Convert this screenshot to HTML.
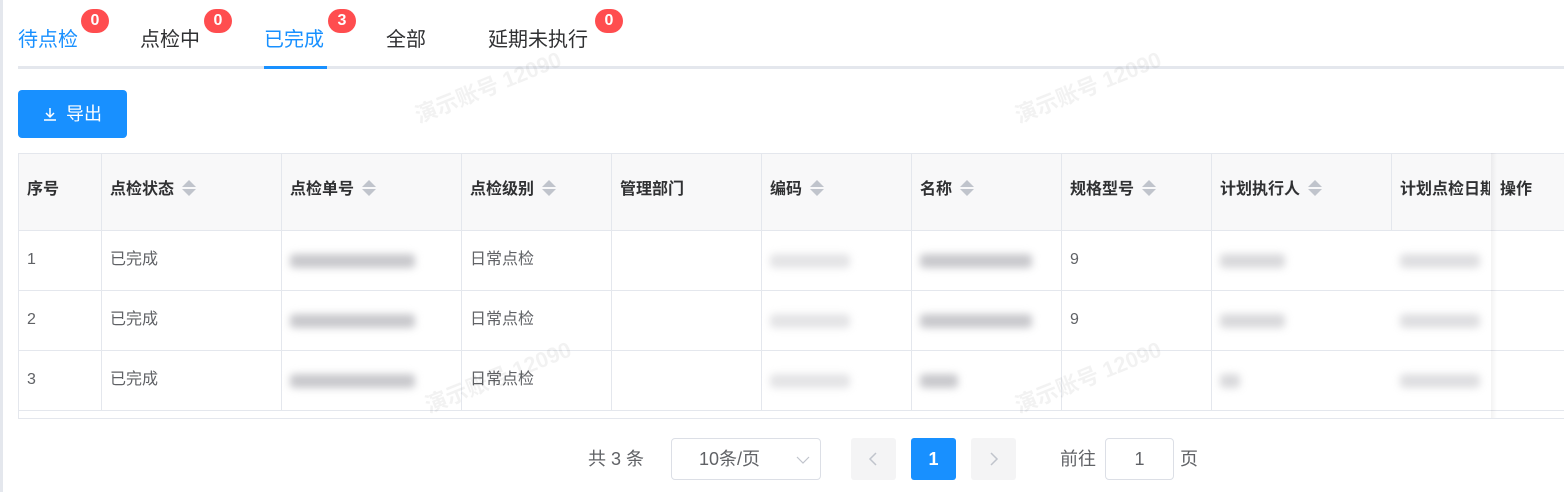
<!DOCTYPE html>
<html><head><meta charset="utf-8"><style>
*{margin:0;padding:0;box-sizing:border-box}
body{width:1564px;height:492px;background:#fff;font-family:"Liberation Sans","Noto Sans CJK SC",sans-serif;position:relative;overflow:hidden;color:#606266}
.lb{position:absolute;left:0;top:0;width:3px;height:492px;background:#e4e7ed}
.tab{position:absolute;top:28px;font-size:20px;line-height:24px;color:#303133}
.badge{position:absolute;top:9px;height:24px;min-width:28px;padding:0 8px;border-radius:12px;background:#ff4d4f;color:#fff;font-size:16px;font-weight:bold;text-align:center;line-height:24px}
.tl{position:absolute;left:18px;top:66px;width:1546px;height:3px;background:#e4e7ed}
.ta{position:absolute;left:264px;top:66px;width:63px;height:3px;background:#1890ff}
.btn{position:absolute;left:18px;top:90px;width:109px;height:48px;background:#1890ff;border-radius:4px;color:#fff;font-size:18px;line-height:48px;padding-left:48px}
.c{position:absolute;font-size:16px;line-height:20px;color:#606266}
.h{position:absolute;top:180px;font-size:16px;line-height:20px;font-weight:bold;color:#303133}
.vl{position:absolute;width:1px;background:#e4e7ed}
.hl{position:absolute;height:1px;background:#e4e7ed}
.blur{position:absolute;height:14px;background:#c8c8cc;filter:blur(4px);border-radius:4px}
.sort{display:inline-block;vertical-align:middle;margin-left:8px;width:14px;height:18px;position:relative;top:-2px}
.sort:before{content:"";position:absolute;left:0;top:1px;border:7px solid transparent;border-top:0;border-bottom:7px solid #c0c4cc}
.sort:after{content:"";position:absolute;left:0;top:10px;border:7px solid transparent;border-bottom:0;border-top:7px solid #c0c4cc}
.wm{position:absolute;font-size:22px;color:rgba(0,0,0,0.05);font-weight:bold;transform:rotate(-22deg)}
</style></head><body>
<div class="lb"></div>
<div class="tab" style="left:18px;color:#1890ff">待点检</div><div class="badge" style="left:81px">0</div>
<div class="tab" style="left:140px">点检中</div><div class="badge" style="left:204px">0</div>
<div class="tab" style="left:264px;color:#1890ff">已完成</div><div class="badge" style="left:328px">3</div>
<div class="tab" style="left:386px">全部</div>
<div class="tab" style="left:488px">延期未执行</div><div class="badge" style="left:595px">0</div>
<div class="tl"></div><div class="ta"></div>
<div class="wm" style="left:410px;top:70px">演示账号 12090</div>
<div class="wm" style="left:1010px;top:70px">演示账号 12090</div>
<div class="btn"><svg style="position:absolute;left:25px;top:17px" width="14" height="14" viewBox="0 0 14 14"><path d="M7 1v9M3 6l4 4 4-4M1 13h12" stroke="#fff" stroke-width="1.5" fill="none"/></svg>导出</div>
<div style="position:absolute;left:18px;top:153px;width:1546px;height:77px;background:#f8f8f9"></div>
<div class="hl" style="left:18px;top:153px;width:1546px"></div>
<div class="hl" style="left:18px;top:230px;width:1546px"></div>
<div class="hl" style="left:18px;top:290px;width:1546px"></div>
<div class="hl" style="left:18px;top:350px;width:1546px"></div>
<div class="hl" style="left:18px;top:410px;width:1546px"></div>
<div class="hl" style="left:18px;top:418px;width:1546px"></div>
<div class="vl" style="left:18px;top:153px;height:265px"></div>
<div class="vl" style="left:101px;top:153px;height:257px"></div>
<div class="vl" style="left:281px;top:153px;height:257px"></div>
<div class="vl" style="left:461px;top:153px;height:257px"></div>
<div class="vl" style="left:611px;top:153px;height:257px"></div>
<div class="vl" style="left:761px;top:153px;height:257px"></div>
<div class="vl" style="left:911px;top:153px;height:257px"></div>
<div class="vl" style="left:1061px;top:153px;height:257px"></div>
<div class="vl" style="left:1211px;top:153px;height:257px"></div>
<div class="vl" style="left:1391px;top:153px;height:77px"></div>
<div style="position:absolute;left:1491px;top:153px;width:6px;height:265px;background:linear-gradient(90deg,rgba(0,0,0,0.05),rgba(0,0,0,0))"></div>
<div class="h" style="left:27px">序号</div>
<div class="h" style="left:110px">点检状态<span class="sort"></span></div>
<div class="h" style="left:290px">点检单号<span class="sort"></span></div>
<div class="h" style="left:470px">点检级别<span class="sort"></span></div>
<div class="h" style="left:620px">管理部门</div>
<div class="h" style="left:770px">编码<span class="sort"></span></div>
<div class="h" style="left:920px">名称<span class="sort"></span></div>
<div class="h" style="left:1070px">规格型号<span class="sort"></span></div>
<div class="h" style="left:1220px">计划执行人<span class="sort"></span></div>
<div class="h" style="left:1400px;width:90px;overflow:hidden;white-space:nowrap">计划点检日期</div>
<div class="h" style="left:1500px">操作</div>
<div class="c" style="left:27px;top:250px">1</div><div class="c" style="left:110px;top:250px">已完成</div><div class="c" style="left:470px;top:250px">日常点检</div><div class="c" style="left:1070px;top:250px">9</div>
<div class="c" style="left:27px;top:310px">2</div><div class="c" style="left:110px;top:310px">已完成</div><div class="c" style="left:470px;top:310px">日常点检</div><div class="c" style="left:1070px;top:310px">9</div>
<div class="c" style="left:27px;top:370px">3</div><div class="c" style="left:110px;top:370px">已完成</div><div class="c" style="left:470px;top:370px">日常点检</div>
<div class="blur" style="left:290px;top:254px;width:125px"></div>
<div class="blur" style="left:290px;top:314px;width:125px"></div>
<div class="blur" style="left:290px;top:374px;width:125px"></div>
<div class="blur" style="left:770px;top:254px;width:80px;opacity:.5"></div>
<div class="blur" style="left:770px;top:314px;width:80px;opacity:.5"></div>
<div class="blur" style="left:770px;top:374px;width:80px;opacity:.5"></div>
<div class="blur" style="left:920px;top:254px;width:112px"></div>
<div class="blur" style="left:920px;top:314px;width:112px"></div>
<div class="blur" style="left:920px;top:374px;width:38px"></div>
<div class="blur" style="left:1220px;top:254px;width:65px;opacity:.7"></div>
<div class="blur" style="left:1220px;top:314px;width:65px;opacity:.7"></div>
<div class="blur" style="left:1220px;top:374px;width:20px;opacity:.7"></div>
<div class="blur" style="left:1400px;top:254px;width:80px;opacity:.6"></div>
<div class="blur" style="left:1400px;top:314px;width:80px;opacity:.6"></div>
<div class="blur" style="left:1400px;top:374px;width:80px;opacity:.6"></div>
<div class="wm" style="left:420px;top:360px">演示账号 12090</div>
<div class="wm" style="left:1010px;top:360px">演示账号 12090</div>
<div class="c" style="left:588px;top:449px;font-size:18px">共 3 条</div>
<div style="position:absolute;left:671px;top:438px;width:150px;height:42px;border:1px solid #dcdfe6;border-radius:4px;font-size:18px;line-height:40px;padding-left:27px;color:#606266">10条/页<svg style="position:absolute;right:10px;top:16px" width="14" height="10" viewBox="0 0 14 10"><path d="M1 2l6 6 6-6" stroke="#c0c4cc" stroke-width="1.2" fill="none"/></svg></div>
<div style="position:absolute;left:851px;top:438px;width:45px;height:42px;background:#f4f4f5;border-radius:3px"><svg style="position:absolute;left:17px;top:14px" width="10" height="14" viewBox="0 0 10 14"><path d="M8 1L2 7l6 6" stroke="#c0c4cc" stroke-width="1.5" fill="none"/></svg></div>
<div style="position:absolute;left:911px;top:438px;width:45px;height:42px;background:#1890ff;border-radius:3px;color:#fff;font-weight:bold;font-size:18px;text-align:center;line-height:42px">1</div>
<div style="position:absolute;left:971px;top:438px;width:45px;height:42px;background:#f4f4f5;border-radius:3px"><svg style="position:absolute;left:18px;top:14px" width="10" height="14" viewBox="0 0 10 14"><path d="M2 1l6 6-6 6" stroke="#c0c4cc" stroke-width="1.5" fill="none"/></svg></div>
<div class="c" style="left:1060px;top:449px;font-size:18px">前往</div>
<div style="position:absolute;left:1105px;top:438px;width:69px;height:42px;border:1px solid #dcdfe6;border-radius:4px;font-size:18px;line-height:40px;text-align:center">1</div>
<div class="c" style="left:1180px;top:449px;font-size:18px">页</div>
</body></html>
